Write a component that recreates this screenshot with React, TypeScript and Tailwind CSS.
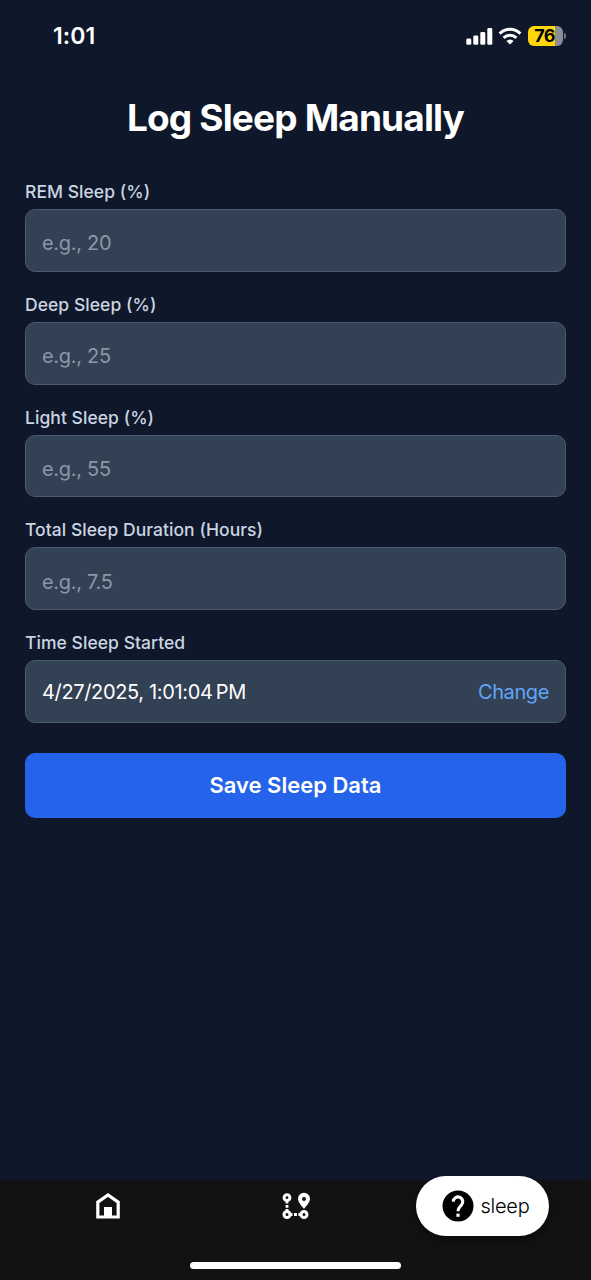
const fields = [
  { label: "REM Sleep (%)", placeholder: "e.g., 20" },
  { label: "Deep Sleep (%)", placeholder: "e.g., 25" },
  { label: "Light Sleep (%)", placeholder: "e.g., 55" },
  { label: "Total Sleep Duration (Hours)", placeholder: "e.g., 7.5" },
];

const StatusBar = () => {
  return (
    <header className="flex h-[71px] items-center justify-between pl-[53px] pr-[25px]">
      <span className="pt-[2px] text-[23px] font-semibold leading-none tracking-[0.1px]">1:01</span>
      <div className="flex items-center">
        <svg width="28" height="18" viewBox="0 0 28 18" fill="white">
          <rect x="0.3" y="11.5" width="5" height="6.3" rx="1.4" />
          <rect x="7.3" y="8.5" width="5" height="9.3" rx="1.4" />
          <rect x="14.3" y="5" width="5" height="12.8" rx="1.4" />
          <rect x="21.3" y="1" width="5" height="16.8" rx="1.4" />
        </svg>
        <svg className="ml-[4px]" width="24" height="18" viewBox="0 0 24 18">
          <path d="M1.6 6.6a14.8 14.8 0 0 1 20.8 0" fill="none" stroke="white" strokeWidth="3" />
          <path d="M5.6 10.8a9.2 9.2 0 0 1 12.8 0" fill="none" stroke="white" strokeWidth="3" />
          <path d="M12 17.6l-3.6-3.5a5 5 0 0 1 7.2 0z" fill="white" />
        </svg>
        <div className="ml-1.5 flex h-[20px] w-[35px] items-center justify-center rounded-[6px] bg-[linear-gradient(90deg,#ffd60a_76%,#8b8e98_76%)] pr-[2px] text-[18px] font-bold leading-none tracking-[-0.8px] text-black">
          76
        </div>
        <div className="ml-px h-[6px] w-[2px] rounded-r-full bg-[#6b7280]" />
      </div>
    </header>
  );
};

const HomeIcon = () => {
  return (
    <svg width="26" height="28" viewBox="0 0 26 28">
      <path d="M2.8 25V10.2L13 3l10.2 7.2V25z" fill="none" stroke="white" strokeWidth="3.2" />
      <path d="M9 15h8v11H9z" fill="white" />
    </svg>
  );
};

const RouteIcon = () => {
  return (
    <svg width="30" height="28" viewBox="0 0 30 28">
      <g fill="none" stroke="white" strokeWidth="3">
        <circle cx="6" cy="5.7" r="2.9" />
        <circle cx="6" cy="22.5" r="3" />
        <circle cx="23" cy="22.5" r="3" />
      </g>
      <path
        d="M23 .8a6 6 0 0 0-6 6c0 3.6 4.2 8 6 10 1.8-2 6-6.4 6-10a6 6 0 0 0-6-6zm0 4.2a2 2 0 1 1 0 4 2 2 0 0 1 0-4z"
        fill="white"
        fillRule="evenodd"
      />
      <path
        d="M4.6 10h2.8v1.6H4.6zM4.6 13h2.8v2.8H4.6zM4.6 17h2.8v2H4.6zM10 21.1h1.5v2.8H10zM13 21.1h2.9v2.8H13zM17.4 21.1H19v2.8h-1.6z"
        fill="white"
      />
    </svg>
  );
};

const HelpIcon = () => {
  return (
    <svg width="32" height="32" viewBox="0 0 32 32">
      <circle cx="16" cy="16" r="15.5" fill="black" />
      <path
        d="M11.2 11.6a4.8 4.8 0 1 1 8.3 3.4c-1.9 2-3.5 2.7-3.5 6.2"
        fill="none"
        stroke="white"
        strokeWidth="3.1"
      />
      <path d="M14.4 23.6h3.2v3.2h-3.2z" fill="white" />
    </svg>
  );
};

export default function App() {
  return (
    <div className="flex h-[1280px] w-full flex-col overflow-hidden bg-[#0f172a] font-['Inter',sans-serif] text-white">
      <StatusBar />

      <main className="flex-1 px-[25px] pt-6">
        <h1 className="mb-10 whitespace-nowrap text-center text-[37px] font-bold leading-[45px] tracking-[-0.85px]">
          Log Sleep Manually
        </h1>

        {fields.map((field) => (
          <div key={field.label} className="mb-[21px]">
            <label className="mb-[5px] block text-[17.5px] font-[450] leading-6 tracking-[0.05px] text-[#cbd5e1]">
              {field.label}
            </label>
            <input
              className="block h-[62.8px] w-full rounded-[10px] border border-[#4b5a6f] bg-[#334155] px-[16px] pt-[6px] text-[20px] tracking-[-0.3px] placeholder:text-[#8b97a9]"
              placeholder={field.placeholder}
            />
          </div>
        ))}

        <div className="mb-[30px]">
          <span className="mb-[5px] block text-[17.5px] font-[450] leading-6 tracking-[0.05px] text-[#cbd5e1]">
            Time Sleep Started
          </span>
          <div className="flex h-[62.8px] items-center justify-between rounded-[10px] border border-[#4b5a6f] bg-[#334155] px-[16px] text-[20px]">
            <span className="tracking-[-0.35px]">4/27/2025, 1:01:04{"\u202f"}PM</span>
            <button className="tracking-[-0.4px] text-[#60a5fa]">Change</button>
          </div>
        </div>

        <button className="block h-[65px] w-full rounded-[10px] bg-[#2563eb] text-[22px] font-semibold">
          Save Sleep Data
        </button>
      </main>

      <footer className="flex h-[100px] flex-col items-center justify-between bg-[#121212] pb-[11px]">
        <nav className="grid w-full grid-cols-[215px_161px_1fr] justify-items-center">
          <button className="mt-3 h-7">
            <HomeIcon />
          </button>
          <button className="mt-3 h-7">
            <RouteIcon />
          </button>
          <button className="-mt-1 mr-[2px] flex h-[60px] w-[133px] items-center justify-center gap-[6px] rounded-full bg-white pl-[7px] text-[20px] font-light tracking-[-0.2px] text-black shadow-[0_3px_10px_rgba(0,0,0,0.5)]">
            <HelpIcon />
            sleep
          </button>
        </nav>
        <div className="h-[7px] w-[211px] rounded-full bg-white" />
      </footer>
    </div>
  );
}
